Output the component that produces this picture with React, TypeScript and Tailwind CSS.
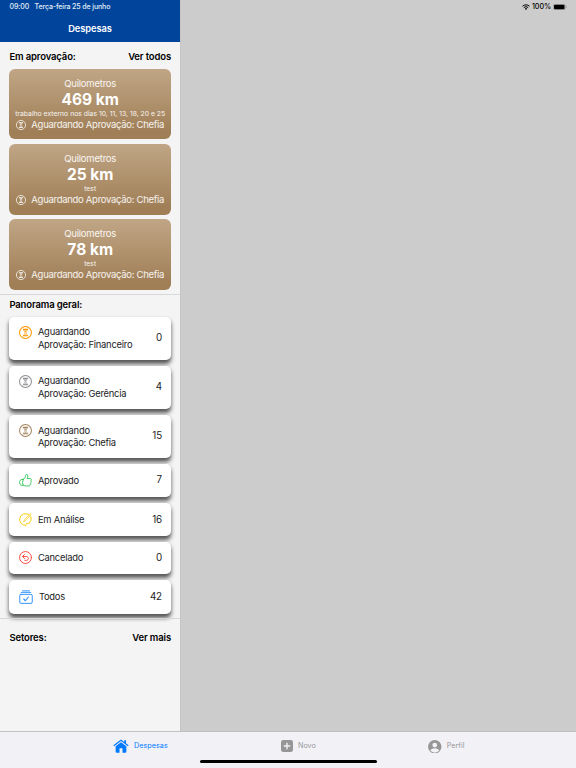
import type { ReactNode } from 'react'
import clsx from 'clsx'

interface Expense {
  id: number
  amount: string
  note: string
}

interface StatusRow {
  id: string
  lines: string[]
  count: number
  icon: ReactNode
  height: string
  textClass?: string
}

const HourglassIcon = ({ className }: { className?: string }) => (
  <svg viewBox="0 0 24 24" fill="none" stroke="currentColor" strokeWidth="1.9" className={className}>
    <circle cx="12" cy="12" r="11" />
    <path d="M8 6.200h8M8 18h8" strokeWidth="2" strokeLinecap="round" />
    <path d="M8.800 6.500c0 3 2.400 3.600 2.400 5.600s-2.400 2.700-2.400 5.800M15.200 6.500c0 3-2.400 3.600-2.400 5.600s2.400 2.700 2.400 5.800" strokeWidth="1.300" />
    <path d="M9.500 8.300h5L12 11.300zM9.300 17.600l2.700-2.500 2.700 2.500z" fill="currentColor" stroke="none" />
  </svg>
)

const ThumbIcon = () => (
  <svg viewBox="0 0 26 26" fill="none" stroke="currentColor" strokeWidth="1.900" strokeLinejoin="round" strokeLinecap="round" className="size-[13px] text-[#34c759]">
    <path d="M8.200 11c2.800-1.600 4.800-4.800 5.100-8.300.1-2.400 4.200-2.500 4.400 1 .1 2-.9 3.500-1.600 5.300h5.800c2.900 0 3.400 2.700 2 3.900 1.200 1.100.9 3.100-.4 3.900.8 1.300.2 3-1 3.400.4 2.300-.9 3.800-3 3.800h-4.700c-2.200 0-3.900-.7-5.400-1.600" />
    <path d="M8.400 11H4.300C2 12.300 1 15 1.200 17.500c.1 2.300 1.200 4.300 3 5.200h4.600c-2.200-3.500-2.300-8 .2-11.700" />
  </svg>
)

const AnalysisIcon = () => (
  <svg viewBox="0 0 26 26" fill="none" stroke="currentColor" strokeWidth="2" strokeLinecap="round" strokeLinejoin="round" className="size-[13px] text-[#f9cb0c]">
    <path d="M19.500 3.200A11.800 11.800 0 1 0 14 24.800" />
    <path d="M23.800 7.500A11.800 11.800 0 0 1 20.500 20.200L14 22" />
    <path d="M9.500 16.700l1-3L22.800 1.600l1.700 1.700-12 12.100z" strokeWidth="1.500" />
  </svg>
)

const CancelIcon = () => (
  <svg viewBox="0 0 26 26" fill="none" stroke="currentColor" strokeWidth="1.900" strokeLinecap="round" strokeLinejoin="round" className="size-[13px] text-[#ff453a]">
    <circle cx="13" cy="13" r="11.900" />
    <path d="M11 7 7 11l4 4M7.200 11h7.600c5.200 0 5.200 7.700 0 7.700h-3" />
  </svg>
)

const AllIcon = () => (
  <svg viewBox="0 0 28 28" fill="none" stroke="currentColor" strokeWidth="1.900" strokeLinecap="round" strokeLinejoin="round" className="size-[14px] text-[#2b8ffb]">
    <path d="M7 1.800h14M4.500 5h19" strokeWidth="2.300" opacity="0.800" />
    <rect x="1.500" y="8.700" width="25" height="18" rx="2.500" />
    <path d="m9.500 18 3.300 3.500 6-7.500" strokeWidth="2.200" />
  </svg>
)

const expenses: Expense[] = [
  { id: 1, amount: '469 km', note: 'trabalho externo nos dias 10, 11, 13, 18, 20 e 25' },
  { id: 2, amount: '25 km', note: 'test' },
  { id: 3, amount: '78 km', note: 'test' },
]

const statuses: StatusRow[] = [
  { id: 'financeiro', lines: ['Aguardando', 'Aprovação: Financeiro'], count: 0, icon: <HourglassIcon className="size-[13px] text-[#ff9500]" />, height: 'h-[43px]', textClass: 'pt-[1.500px]' },
  { id: 'gerencia', lines: ['Aguardando', 'Aprovação: Gerência'], count: 4, icon: <HourglassIcon className="size-[13px] text-[#8e8e93]" />, height: 'h-[43px]', textClass: 'pt-[1.500px]' },
  { id: 'chefia', lines: ['Aguardando', 'Aprovação: Chefia'], count: 15, icon: <HourglassIcon className="size-[13px] text-[#a2845e]" />, height: 'h-[43px]', textClass: 'pt-[1.500px]' },
  { id: 'aprovado', lines: ['Aprovado'], count: 7, icon: <ThumbIcon />, height: 'h-[33px]', textClass: 'pt-px' },
  { id: 'analise', lines: ['Em Análise'], count: 16, icon: <AnalysisIcon />, height: 'h-[33px]', textClass: 'pt-px' },
  { id: 'cancelado', lines: ['Cancelado'], count: 0, icon: <CancelIcon />, height: 'h-[32px]' },
  { id: 'todos', lines: ['Todos'], count: 42, icon: <AllIcon />, height: 'h-[34px]' },
]

const StatusBar = () => (
  <div className="absolute inset-x-0 top-0 flex h-[14px] items-center justify-between pr-[9px] pl-[9.500px] text-[7.200px]">
    <div className="flex gap-[5.500px] text-[7px] font-medium tracking-[-0.110px] text-white/90">
      <span>09:00</span>
      <span>Terça-feira 25 de junho</span>
    </div>
    <div className="flex items-center gap-[2px] font-medium text-black">
      <svg viewBox="0 0 16 12" className="h-[6px] w-[8px]" fill="none" stroke="currentColor" strokeWidth="2">
        <path d="M1 4.500a10 10 0 0 1 14 0M3.600 7.300a6.200 6.200 0 0 1 8.800 0" />
        <path d="M5.700 9.300a3.300 3.300 0 0 1 4.600 0L8 12z" fill="currentColor" stroke="none" />
      </svg>
      <span className="tracking-[-0.100px]">100%</span>
      <svg viewBox="0 0 28 12" className="h-[6px] w-[14px]">
        <rect x="0.500" y="0.500" width="24" height="11" rx="3" fill="none" stroke="#777" />
        <rect x="2" y="1.500" width="21" height="9" rx="2" fill="#000" />
        <path d="M26 4v4c1.600-.7 1.600-3.300 0-4z" fill="#777" />
      </svg>
    </div>
  </div>
)

const ExpenseCard = ({ expense }: { expense: Expense }) => (
  <div className="flex h-[70.400px] flex-col items-center rounded-[6px] bg-linear-to-b from-[#c0a686] to-[#a07f57] to-90% pt-[8px] text-white">
    <p className="h-[13px] text-[9.500px] leading-[13px] tracking-[-0.220px] text-white/90">Quilometros</p>
    <p className="h-[19px] text-[15.500px] leading-[19px] font-bold">{expense.amount}</p>
    <p className="h-[9px] text-[6.800px] leading-[10px] tracking-[0.010px] whitespace-nowrap text-white/90">
      {expense.note}
    </p>
    <div className="flex h-[13px] items-center gap-[5px] text-white/90">
      <HourglassIcon className="size-[10px] shrink-0" />
      <span className="text-[9.500px] leading-[13px] tracking-[-0.290px] whitespace-nowrap">Aguardando Aprovação: Chefia</span>
    </div>
  </div>
)

const StatusCard = ({ row }: { row: StatusRow }) => {
  const isDouble = row.lines.length > 1
  return (
    <div
      className={clsx(
        'flex items-center rounded-[5px] bg-white pr-[9px] pl-[10px] text-[9.400px] text-[#1c1c1e] shadow-[0_3.500px_4.500px_rgba(0,0,0,0.65)]',
        row.height,
      )}
    >
      <div className={clsx('mr-[5.500px] shrink-0', isDouble && 'mb-[12px]')}>{row.icon}</div>
      <div className={clsx('flex-1 leading-[12.400px] tracking-[-0.240px]', row.textClass)}>
        {row.lines.map((line) => (
          <p key={line}>{line}</p>
        ))}
      </div>
      <span className="pt-px text-[9.800px] tracking-[-0.100px]">{row.count}</span>
    </div>
  )
}

const SectionTitle = ({ title, action }: { title: string; action?: string }) => (
  <div className="flex justify-between text-[9.500px] leading-[13px] font-semibold tracking-[-0.140px] text-black">
    <h2>{title}</h2>
    {action && <button type="button">{action}</button>}
  </div>
)

const TabBar = () => (
  <nav className="relative flex h-[37.500px] border-t border-[#c0c0c3] bg-[#f2f1f6] text-[7.200px] text-[#98989b]">
    <div className="flex h-[29.500px] w-[113px] items-center gap-[5px] pl-[113px] whitespace-nowrap text-[#007aff]">
      <svg viewBox="0 0 32 28" className="h-[14px] w-[16px] shrink-0" fill="currentColor">
        <path d="M.7 12.500 16 .8l6.500 5V2.500H26v6L31.300 12.500 29.800 14.500 16 4.200 2.200 14.500z" />
        <path d="M16 6.300 5.300 14.300v11.200A2.200 2.200 0 0 0 7.500 27.700H13V18.500h6v9.200h5.500a2.200 2.200 0 0 0 2.200-2.200V14.300z" />
      </svg>
      <span className="pt-px tracking-[0.050px]">Despesas</span>
    </div>
    <div className="flex h-[29.500px] items-center gap-[5px] pl-[168px]">
      <svg viewBox="0 0 24 24" className="size-[12px]">
        <rect width="24" height="24" rx="4.500" fill="#969696" />
        <path d="M12 6.500v11M6.500 12h11" stroke="#f2f1f6" strokeWidth="2.700" strokeLinecap="round" />
      </svg>
      <span className="pt-px">Novo</span>
    </div>
    <div className="flex h-[29.500px] items-center gap-[5px] pl-[112.500px]">
      <svg viewBox="0 0 28 28" className="size-[13.500px]">
        <circle cx="14" cy="14" r="14" fill="#969696" />
        <circle cx="14" cy="10.500" r="5" fill="#f2f1f6" />
        <path d="M4.500 22c1.200-3.200 5-5 9.500-5s8.300 1.800 9.500 5A12.500 12.500 0 0 1 14 26.500 12.500 12.500 0 0 1 4.500 22z" fill="#f2f1f6" />
      </svg>
      <span className="pt-px">Perfil</span>
    </div>
    <div className="absolute bottom-[5px] left-[199.500px] h-[3px] w-[177px] rounded-full bg-black" />
  </nav>
)

export default function App() {
  return (
    <div className="relative flex h-[768px] w-[576px] flex-col overflow-hidden bg-[#cccccc] font-['Inter',sans-serif]">
      <div className="flex min-h-0 flex-1">
        <aside className="flex w-[180px] shrink-0 flex-col bg-[#f4f4f5] shadow-[1px_0_0_#c5c5c5]">
          <header className="flex h-[42px] shrink-0 justify-center bg-[#00449c] pt-[21.500px] text-[9.300px] leading-[13px] font-semibold tracking-[-0.060px] text-white">
            Despesas
          </header>
          <section className="h-[252px] shrink-0 pt-[8px] pr-[9px] pl-[9.400px]">
            <SectionTitle title="Em aprovação:" action="Ver todos" />
            <div className="mt-[6px] flex flex-col gap-[4.800px]">
              {expenses.map((expense) => (
                <ExpenseCard key={expense.id} expense={expense} />
              ))}
            </div>
          </section>
          <section className="h-[324px] shrink-0 border-t border-[#d8d8da] pt-[3px] pr-[9px] pl-[9.400px]">
            <SectionTitle title="Panorama geral:" />
            <div className="mt-[5.500px] flex flex-col gap-[6.100px]">
              {statuses.map((row) => (
                <StatusCard key={row.id} row={row} />
              ))}
            </div>
          </section>
          <section className="border-t border-[#d8d8da] pt-[12.400px] pr-[9px] pl-[9.400px]">
            <SectionTitle title="Setores:" action="Ver mais" />
          </section>
        </aside>
        <main className="flex-1" />
      </div>
      <TabBar />
      <StatusBar />
    </div>
  )
}
